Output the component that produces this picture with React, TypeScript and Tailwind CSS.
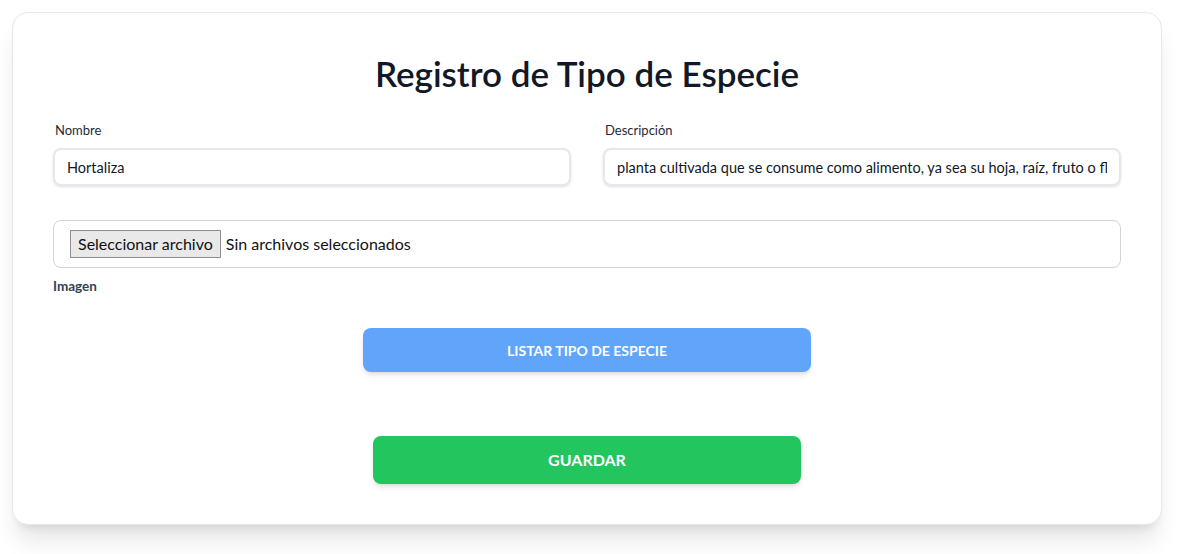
import { useState } from "react";

function App() {
  const [nombre, setNombre] = useState("Hortaliza");
  const [descripcion, setDescripcion] = useState(
    "planta cultivada que se consume como alimento, ya sea su hoja, raíz, fruto o flor."
  );
  const [archivo, setArchivo] = useState("");

  return (
    <div
      className="min-h-screen w-full bg-white pt-3 pr-[25px] pb-3 pl-3"
      style={{ fontFamily: 'Lato, "Noto Sans", Arial, sans-serif' }}
    >
      <div className="rounded-2xl border border-[#e5e7eb] bg-white px-10 pt-[40px] pb-10 shadow-xl">
        <h1 className="mb-[27px] text-center text-[35px] leading-10 font-semibold text-[#111827]">
          Registro de Tipo de Especie
        </h1>

        <div className="grid grid-cols-2 gap-8">
          <div className="flex flex-col">
            <label className="mb-2 pl-0.5 text-[13px] leading-5 text-[#1f2937]">Nombre</label>
            <input
              value={nombre}
              onChange={(e) => setNombre(e.target.value)}
              className="h-[38px] rounded-lg border-2 border-[#e5e7eb] px-3 text-[14.5px] text-[#111827] shadow-sm outline-none"
            />
          </div>
          <div className="flex flex-col">
            <label className="mb-2 pl-0.5 text-[13px] leading-5 text-[#1f2937]">Descripción</label>
            <input
              value={descripcion}
              onChange={(e) => setDescripcion(e.target.value)}
              className="h-[38px] rounded-lg border-2 border-[#e5e7eb] px-3 text-[14.5px] text-[#111827] shadow-sm outline-none"
            />
          </div>
        </div>

        <label className="mt-[34px] flex h-12 cursor-pointer items-center rounded-lg border border-[#d1d5db] px-4">
          <input
            type="file"
            className="hidden"
            onChange={(e) => setArchivo(e.target.files?.[0]?.name ?? "")}
          />
          <span className="flex h-7 items-center border border-[#8f8f8f] bg-[#e9e9e9] px-[7px] text-[16px] text-[#111]">
            Seleccionar archivo
          </span>
          <span className="ml-[5px] text-[16px] text-[#111]">
            {archivo || "Sin archivos seleccionados"}
          </span>
        </label>
        <div className="mt-2 text-[13.5px] leading-5 font-bold text-[#334155]">Imagen</div>

        <div className="mt-8 flex justify-center">
          <button className="h-11 w-[448px] rounded-lg bg-[#60a5fa] text-[14px] font-bold text-white shadow-md">
            LISTAR TIPO DE ESPECIE
          </button>
        </div>

        <div className="mt-16 flex justify-center">
          <button className="h-12 w-[428px] rounded-lg bg-[#22c55e] text-[16px] font-bold text-white shadow-md">
            GUARDAR
          </button>
        </div>
      </div>
    </div>
  );
}

export default App;
